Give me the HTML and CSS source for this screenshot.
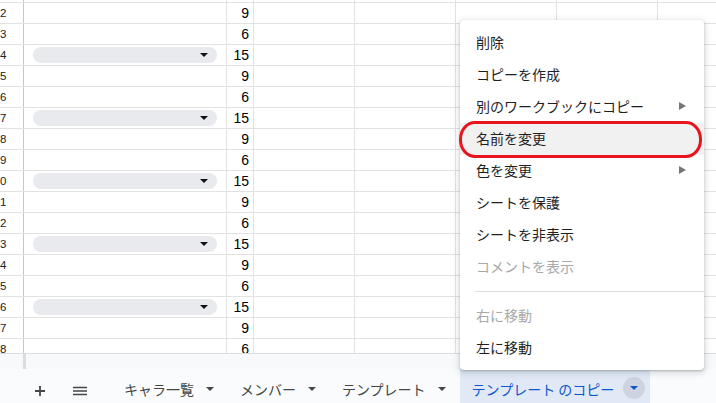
FILE: index.html
```html
<!DOCTYPE html>
<html lang="ja">
<head>
<meta charset="utf-8">
<link rel="stylesheet" href="styles.css">
</head>
<body>
<div class="sheet">
  <div class="row row-top"><div class="c c0"></div><div class="c c1"></div><div class="c c2"></div><div class="c c3"></div><div class="c c3"></div><div class="c c3"></div><div class="c c3"></div><div class="c c7"></div></div>
  <div class="row"><div class="c c0">2</div><div class="c c1"></div><div class="c c2">9</div><div class="c c3"></div><div class="c c3"></div><div class="c c3"></div><div class="c c3"></div><div class="c c7"></div></div>
  <div class="row"><div class="c c0">3</div><div class="c c1"></div><div class="c c2">6</div><div class="c c3"></div><div class="c c3"></div><div class="c c3"></div><div class="c c3"></div><div class="c c7"></div></div>
  <div class="row"><div class="c c0">4</div><div class="c c1"><div class="chip"><svg width="8" height="4" viewBox="0 0 8 4"><path d="M0 0h8L4 4z"/></svg></div></div><div class="c c2">15</div><div class="c c3"></div><div class="c c3"></div><div class="c c3"></div><div class="c c3"></div><div class="c c7"></div></div>
  <div class="row"><div class="c c0">5</div><div class="c c1"></div><div class="c c2">9</div><div class="c c3"></div><div class="c c3"></div><div class="c c3"></div><div class="c c3"></div><div class="c c7"></div></div>
  <div class="row"><div class="c c0">6</div><div class="c c1"></div><div class="c c2">6</div><div class="c c3"></div><div class="c c3"></div><div class="c c3"></div><div class="c c3"></div><div class="c c7"></div></div>
  <div class="row"><div class="c c0">7</div><div class="c c1"><div class="chip"><svg width="8" height="4" viewBox="0 0 8 4"><path d="M0 0h8L4 4z"/></svg></div></div><div class="c c2">15</div><div class="c c3"></div><div class="c c3"></div><div class="c c3"></div><div class="c c3"></div><div class="c c7"></div></div>
  <div class="row"><div class="c c0">8</div><div class="c c1"></div><div class="c c2">9</div><div class="c c3"></div><div class="c c3"></div><div class="c c3"></div><div class="c c3"></div><div class="c c7"></div></div>
  <div class="row"><div class="c c0">9</div><div class="c c1"></div><div class="c c2">6</div><div class="c c3"></div><div class="c c3"></div><div class="c c3"></div><div class="c c3"></div><div class="c c7"></div></div>
  <div class="row"><div class="c c0">0</div><div class="c c1"><div class="chip"><svg width="8" height="4" viewBox="0 0 8 4"><path d="M0 0h8L4 4z"/></svg></div></div><div class="c c2">15</div><div class="c c3"></div><div class="c c3"></div><div class="c c3"></div><div class="c c3"></div><div class="c c7"></div></div>
  <div class="row"><div class="c c0">1</div><div class="c c1"></div><div class="c c2">9</div><div class="c c3"></div><div class="c c3"></div><div class="c c3"></div><div class="c c3"></div><div class="c c7"></div></div>
  <div class="row"><div class="c c0">2</div><div class="c c1"></div><div class="c c2">6</div><div class="c c3"></div><div class="c c3"></div><div class="c c3"></div><div class="c c3"></div><div class="c c7"></div></div>
  <div class="row"><div class="c c0">3</div><div class="c c1"><div class="chip"><svg width="8" height="4" viewBox="0 0 8 4"><path d="M0 0h8L4 4z"/></svg></div></div><div class="c c2">15</div><div class="c c3"></div><div class="c c3"></div><div class="c c3"></div><div class="c c3"></div><div class="c c7"></div></div>
  <div class="row"><div class="c c0">4</div><div class="c c1"></div><div class="c c2">9</div><div class="c c3"></div><div class="c c3"></div><div class="c c3"></div><div class="c c3"></div><div class="c c7"></div></div>
  <div class="row"><div class="c c0">5</div><div class="c c1"></div><div class="c c2">6</div><div class="c c3"></div><div class="c c3"></div><div class="c c3"></div><div class="c c3"></div><div class="c c7"></div></div>
  <div class="row"><div class="c c0">6</div><div class="c c1"><div class="chip"><svg width="8" height="4" viewBox="0 0 8 4"><path d="M0 0h8L4 4z"/></svg></div></div><div class="c c2">15</div><div class="c c3"></div><div class="c c3"></div><div class="c c3"></div><div class="c c3"></div><div class="c c7"></div></div>
  <div class="row"><div class="c c0">7</div><div class="c c1"></div><div class="c c2">9</div><div class="c c3"></div><div class="c c3"></div><div class="c c3"></div><div class="c c3"></div><div class="c c7"></div></div>
  <div class="row"><div class="c c0">8</div><div class="c c1"></div><div class="c c2">6</div><div class="c c3"></div><div class="c c3"></div><div class="c c3"></div><div class="c c3"></div><div class="c c7"></div></div>
</div>
<div class="strip"><div class="strip-bar"></div></div>
<div class="tabs">
  <div class="tab-icon plus"><svg width="12" height="12" viewBox="0 0 12 12"><path d="M6 1v10M1 6h10" stroke="#444746" stroke-width="1.8"/></svg></div>
  <div class="tab-icon menu-icon"><svg width="14" height="10" viewBox="0 0 14 10"><path d="M0 1.5h14M0 5h14M0 8.5h14" stroke="#444746" stroke-width="1.6"/></svg></div>
  <div class="tab tab-first"><span>キャラ一覧</span><svg width="8" height="4" viewBox="0 0 8 4"><path d="M0 0h8L4 4z" fill="#444746"/></svg></div>
  <div class="tab"><span>メンバー</span><svg width="8" height="4" viewBox="0 0 8 4"><path d="M0 0h8L4 4z" fill="#444746"/></svg></div>
  <div class="tab"><span>テンプレート</span><svg width="8" height="4" viewBox="0 0 8 4"><path d="M0 0h8L4 4z" fill="#444746"/></svg></div>
  <div class="tab tab-active"><span>テンプレート のコピー</span><div class="drop"><svg width="8" height="4" viewBox="0 0 8 4"><path d="M0 0h8L4 4z" fill="#0b57d0"/></svg></div></div>
</div>

<div class="ctx-menu">
  <div class="item">削除</div>
  <div class="item">コピーを作成</div>
  <div class="item">別のワークブックにコピー<span class="sub"></span></div>
  <div class="item hover">名前を変更</div>
  <div class="item">色を変更<span class="sub"></span></div>
  <div class="item">シートを保護</div>
  <div class="item">シートを非表示</div>
  <div class="item disabled">コメントを表示</div>
  <div class="sep"></div>
  <div class="item disabled">右に移動</div>
  <div class="item">左に移動</div>
</div>
<div class="annot"></div>
</body>
</html>
```

FILE: styles.css
```css
* { box-sizing: border-box; }
html, body {
  margin: 0;
  padding: 0;
  width: 716px;
  height: 403px;
  overflow: hidden;
  background: #ffffff;
  font-family: "Noto Sans CJK JP", "Liberation Sans", sans-serif;
}
.sheet {
  height: 354px;
  overflow: hidden;
  border-bottom: 1px solid #dadce0;
  display: flex;
  flex-direction: column;
}
.row {
  display: flex;
  height: 21px;
  flex: none;
  border-bottom: 1px solid #e2e2e2;
}
.row-top { height: 3px; }
.c {
  flex: none;
  height: 100%;
  border-right: 1px solid #e2e2e2;
  display: flex;
  align-items: center;
  overflow: hidden;
}
.c0 {
  width: 24px;
  border-right-color: #c7c7c7;
  font-family: "Liberation Sans", Arial, sans-serif;
  font-size: 11.5px;
  color: #222;
  padding-left: 0;
}
.c1 { width: 203px; padding-left: 9px; }
.c2 {
  width: 27px;
  justify-content: flex-end;
  padding-right: 4px;
  font-family: "Liberation Sans", Arial, sans-serif;
  font-size: 14px;
  color: #000;
}
.c3 { width: 101px; }
.c7 { flex: 1; border-right: none; }
.chip {
  width: 184px;
  height: 16px;
  border-radius: 8px;
  background: #e8eaed;
  display: flex;
  align-items: center;
  justify-content: flex-end;
  padding-right: 9px;
}
.chip svg { fill: #111; }
.strip {
  height: 15px;
  background: #f8f9fa;
  padding-left: 23px;
}
.strip-bar {
  width: 3px;
  height: 100%;
  background: #dcdcdc;
}
.tabs {
  height: 34px;
  background: #f9fbfd;
  display: flex;
  align-items: stretch;
  font-size: 14px;
  color: #444746;
}
.tab-icon {
  display: flex;
  align-items: center;
  justify-content: center;
  padding-top: 10px;
}
.plus { width: 12px; margin-left: 34px; }
.menu-icon { width: 14px; margin-left: 27px; }
.tab {
  display: flex;
  align-items: center;
  gap: 12px;
  padding: 6px 14px 0 12px;
  white-space: nowrap;
}
.tab-first { margin-left: 25px; }
.tab-active {
  background: #e1e9f7;
  color: #0b57d0;
  gap: 4px;
  padding: 6px 5px 0 12px;
  width: 190px;
}
.drop {
  width: 22px;
  height: 22px;
  border-radius: 50%;
  background: #cdd4e0;
  display: flex;
  align-items: center;
  justify-content: center;
  margin-left: auto;
  margin-bottom: 2px;
}
.ctx-menu {
  position: absolute;
  left: 460px;
  top: 20px;
  width: 244px;
  height: 350px;
  background: #fff;
  border-radius: 4px;
  padding: 7px 0 6px;
  box-shadow: 0 2px 6px 2px rgba(60, 64, 67, 0.15), 0 1px 2px rgba(60, 64, 67, 0.3);
  font-size: 14px;
  color: #1f1f1f;
}
.item {
  height: 32px;
  display: flex;
  align-items: center;
  padding: 0 18px 3px 16px;
  white-space: nowrap;
}
.item.hover { background: #f1f1f1; }
.item.disabled { color: #a8a8a8; }
.sub {
  margin-left: auto;
  width: 0;
  height: 0;
  border-top: 4.5px solid transparent;
  border-bottom: 4.5px solid transparent;
  border-left: 7px solid #777;
}
.sep {
  height: 17px;
  display: flex;
  align-items: center;
}
.sep::before {
  content: "";
  display: block;
  width: 229px;
  margin-left: 15px;
  height: 1px;
  background: #dadce0;
}
.annot {
  position: absolute;
  left: 459px;
  top: 121px;
  width: 243px;
  height: 37px;
  border: 3px solid #e8141e;
  border-radius: 16px / 18px;
}
```
